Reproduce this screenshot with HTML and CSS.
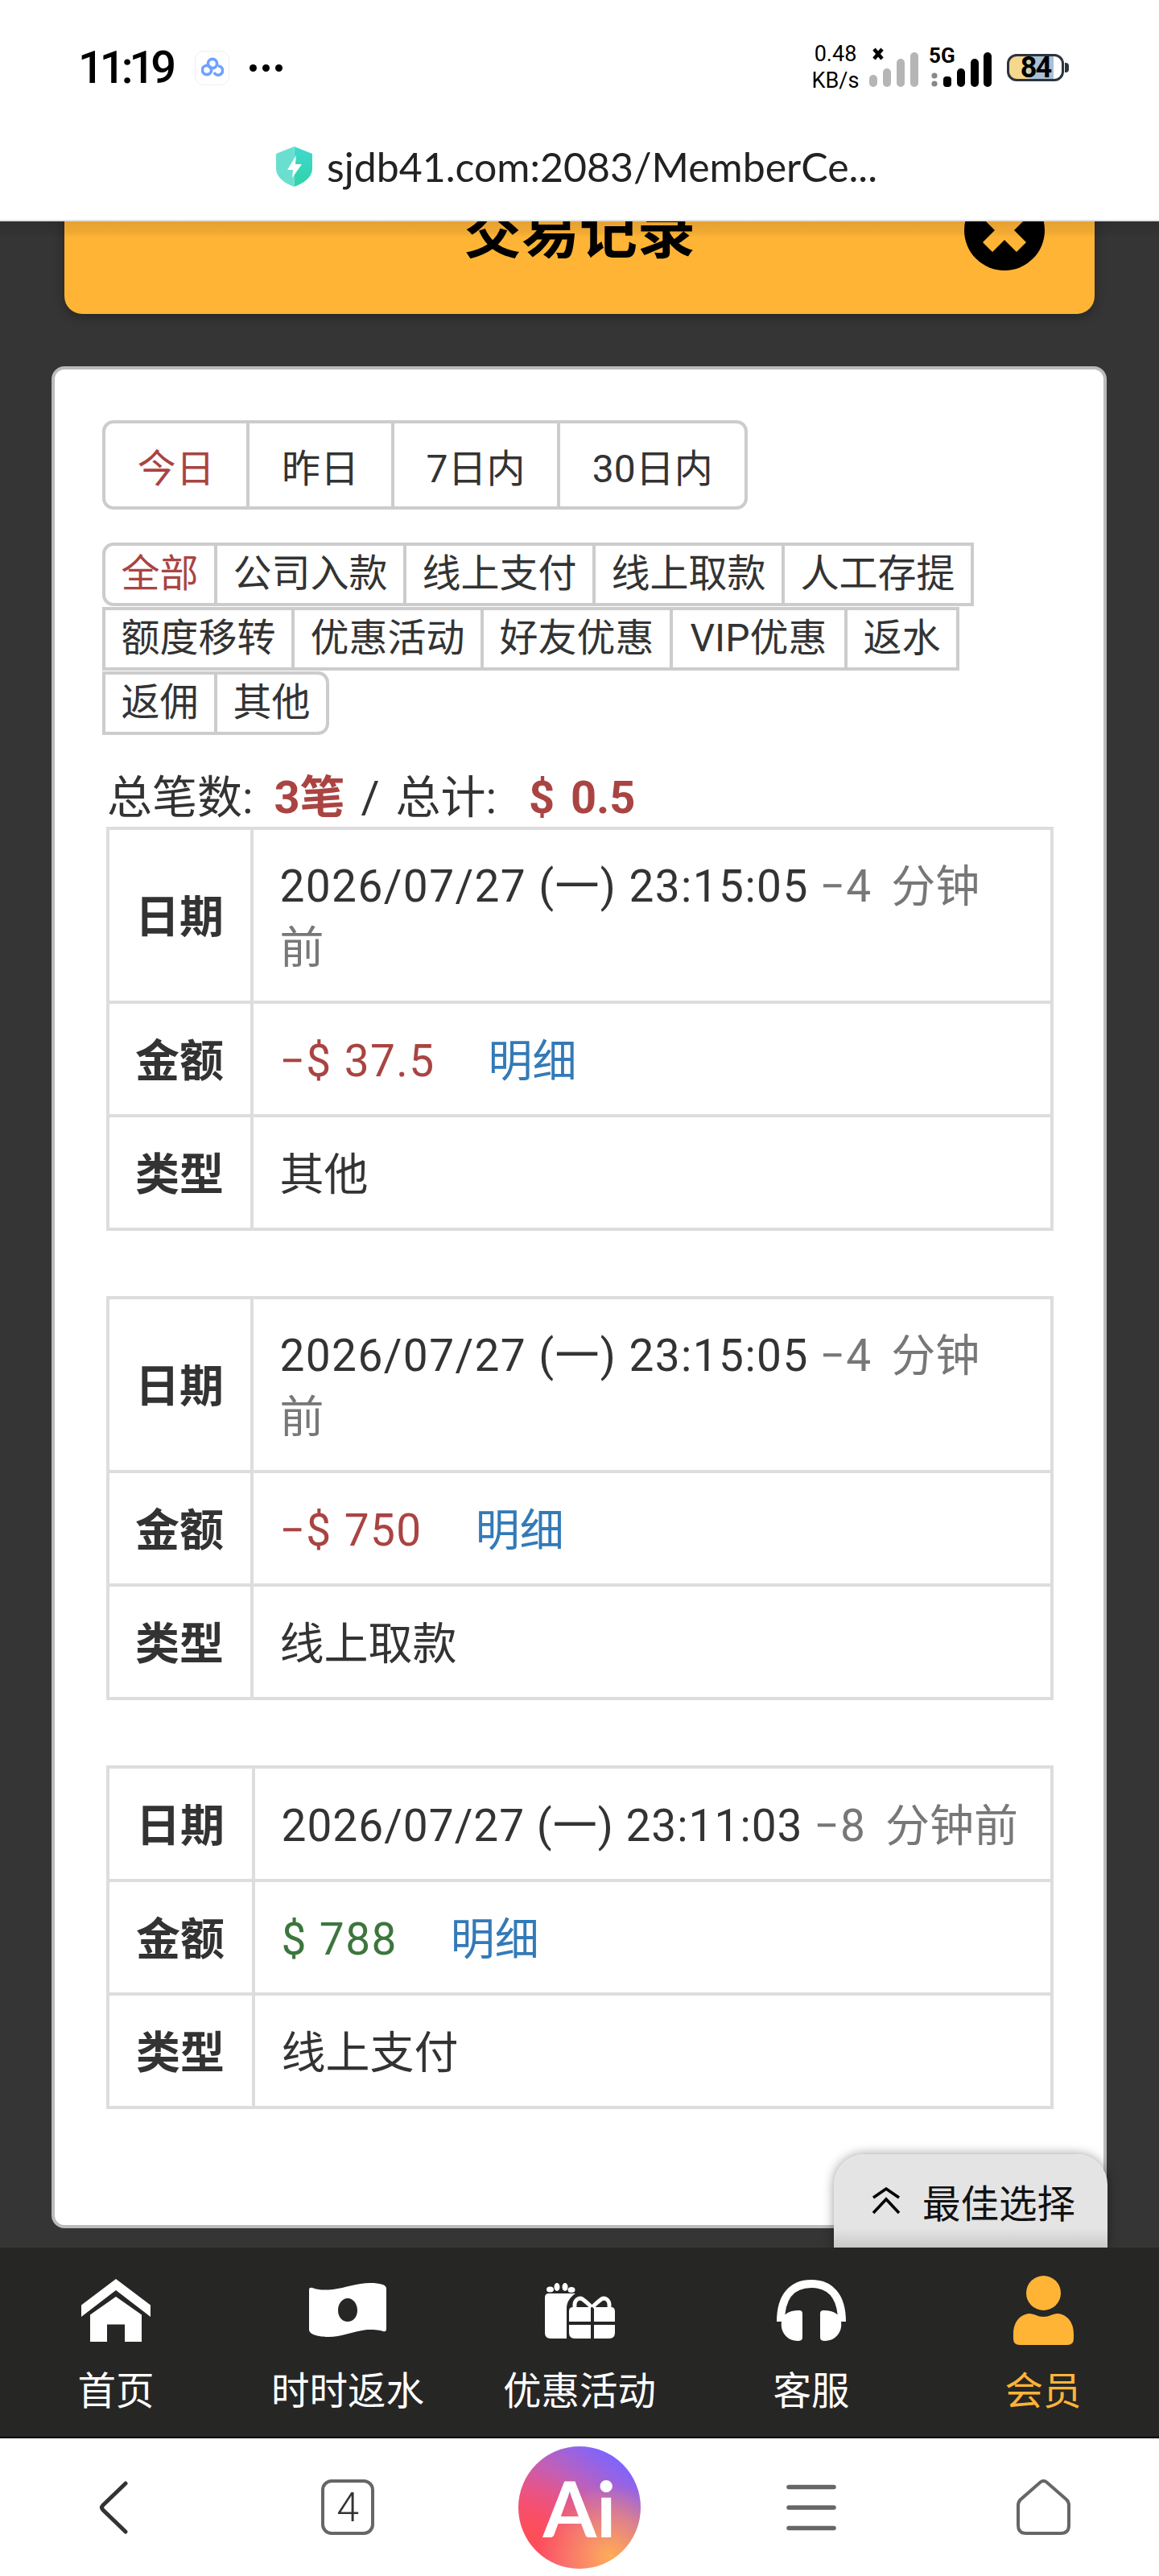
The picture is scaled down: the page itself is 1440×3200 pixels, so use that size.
FILE: index.html
```html
<!DOCTYPE html>
<html lang="zh-CN">
<head>
<meta charset="utf-8">
<title>交易记录</title>
<link rel="stylesheet" href="styles.css">
</head>
<body>
<div class="phone">
  <header class="top">
    <div class="status">
      <span class="clock">11:19</span>
      <span class="app-badge">
        <svg width="28" height="26" viewBox="0 0 28 26"><g fill="none" stroke="#6ea1ff" stroke-width="3.6"><circle cx="14" cy="8" r="5.6"/><circle cx="7" cy="16" r="5.6"/><path d="M16 19a5.6 5.6 0 1 0 5-8"/></g></svg>
      </span>
      <span class="more"><i></i><i></i><i></i></span>
      <span class="status-right">
        <span class="speed"><span>0.48</span><span>KB/s</span></span>
        <svg class="signals" width="164" height="58" viewBox="0 0 164 58">
          <path d="M10 6l10 12M20 6l-10 12" stroke="#000" stroke-width="4.5" fill="none"/>
          <g fill="#b5b5b5"><rect x="4" y="38" width="10" height="15" rx="5"/><rect x="21" y="30" width="10" height="23" rx="5"/><rect x="38" y="18" width="10" height="35" rx="5"/><rect x="55" y="10" width="10" height="43" rx="5"/></g>
          <text class="net" x="78" y="23">5G</text>
          <circle cx="85" cy="39" r="3.6" fill="#888"/><circle cx="85" cy="49" r="3.6" fill="#888"/>
          <g fill="#000"><rect x="96" y="40" width="10" height="13" rx="4"/><rect x="113" y="30" width="10" height="23" rx="5"/><rect x="130" y="18" width="10" height="35" rx="5"/><rect x="146" y="10" width="10" height="43" rx="5"/></g>
        </svg>
        <span class="battery"><span class="battery-num">84</span></span>
      </span>
    </div>
    <div class="address">
      <svg width="45" height="50" viewBox="0 0 45 50">
        <defs><linearGradient id="shieldR" x1="0" y1="0" x2="0" y2="1"><stop offset="0" stop-color="#40d9d0"/><stop offset="1" stop-color="#2fd3a6"/></linearGradient></defs>
        <path d="M22.5 0L45 9V28C45 38 34 46 22.5 50Z" fill="url(#shieldR)"/>
        <path d="M22.5 0L0 9V28C0 38 11 46 22.5 50Z" fill="#6adfd0"/>
        <path d="M25 11L14 29H21L20 39L32 22H24Z" fill="#fff"/>
      </svg>
      <span class="url">sjdb41.com:2083/MemberCe...</span>
    </div>
  </header>

  <main class="main">
    <div class="panel">
      <div class="title-bar">
        <h1 class="title">交易记录</h1>
        <span class="close">
          <svg width="100" height="100" viewBox="0 0 100 100"><path d="M29 29L71 71M71 29L29 71" stroke="#ffb436" stroke-width="17" fill="none"/></svg>
        </span>
      </div>

      <section class="card">
        <div class="ranges">
          <a class="range on">今日</a><a class="range">昨日</a><a class="range">7日内</a><a class="range">30日内</a>
        </div>
        <div class="filters">
          <a class="filter on first">全部</a><a class="filter">公司入款</a><a class="filter">线上支付</a><a class="filter">线上取款</a><a class="filter">人工存提</a><a class="filter">额度移转</a><a class="filter">优惠活动</a><a class="filter">好友优惠</a><a class="filter vip">VIP优惠</a><a class="filter">返水</a><a class="filter">返佣</a><a class="filter last">其他</a>
        </div>
        <p class="summary">总笔数: <b class="sum-count">3笔</b> / 总计: <b class="sum-total">$ 0.5</b></p>

        <table class="record">
          <tr class="tall"><th>日期</th><td><span class="date">2026/07/27 (一) 23:15:05</span> <span class="ago"><span class="num">−4</span> 分钟<br>前</span></td></tr>
          <tr><th>金额</th><td><span class="num out">−$ 37.5</span><a class="detail">明细</a></td></tr>
          <tr><th>类型</th><td>其他</td></tr>
        </table>
        <table class="record">
          <tr class="tall"><th>日期</th><td><span class="date">2026/07/27 (一) 23:15:05</span> <span class="ago"><span class="num">−4</span> 分钟<br>前</span></td></tr>
          <tr><th>金额</th><td><span class="num out">−$ 750</span><a class="detail">明细</a></td></tr>
          <tr><th>类型</th><td>线上取款</td></tr>
        </table>
        <table class="record wide">
          <tr><th>日期</th><td><span class="date tight">2026/07/27 (一) 23:11:03</span> <span class="ago"><span class="num">−8</span> 分钟前</span></td></tr>
          <tr><th>金额</th><td><span class="num in">$ 788</span><a class="detail">明细</a></td></tr>
          <tr><th>类型</th><td>线上支付</td></tr>
        </table>
      </section>
    </div>

    <div class="best">
      <svg width="36" height="34" viewBox="0 0 36 34"><path d="M2 13L18 2L34 13M2 32L18 15L34 32" fill="none" stroke="#000" stroke-width="3.6"/></svg>
      <span>最佳选择</span>
    </div>
  </main>

  <nav class="tabbar">
    <a class="tab">
      <span class="tab-icon"><svg width="86" height="78" viewBox="0 0 86 78"><path d="M43 0L86 32.4V47L43 14L0 47V32.4Z M43 22L75 44.5V78H54V56.6H32V78H11V44.5Z" fill="#fff"/></svg></span>
      <span>首页</span>
    </a>
    <a class="tab">
      <span class="tab-icon"><svg width="96" height="68" viewBox="0 0 96 68"><path fill="#fff" fill-rule="evenodd" d="M0 8Q0 5 4 6C12 9 20 9 30 8C45 6 60 0 76 0C88 0 96 2 96 7V57Q96 61 92 60C85 58 80 58 72 58C55 60 40 67 24 67C12 67 0 64 0 58Z M48 19C41 19 36 26 36 34C36 42 41 48 48 48C55 48 60 42 60 34C60 26 55 19 48 19Z"/></svg></span>
      <span>时时返水</span>
    </a>
    <a class="tab">
      <span class="tab-icon"><svg width="87" height="69" viewBox="0 0 87 69"><g fill="#fff"><ellipse cx="6.500" cy="8" rx="4.500" ry="3.500"/><ellipse cx="15" cy="5" rx="3.500" ry="5"/><ellipse cx="25" cy="5" rx="3.500" ry="5"/><ellipse cx="33" cy="8.500" rx="4.500" ry="3.500"/><path d="M0 18Q0 13 5 13H38C32 17 27 23 27 32V69H7Q0 69 0 62Z"/><path d="M30 35Q30 30 35 30H57V48H30Z M61 30H82Q87 30 87 35V48H61Z M30 52H57V69H37Q30 69 30 62Z M61 52H87V62Q87 69 80 69H61Z"/></g><g fill="none" stroke="#fff" stroke-width="5"><path d="M37 30C36 20 43 17 48 21C52 24 55 27 58 30"/><path d="M80 30C81 20 74 17 69 21C65 24 62 27 59 30"/></g></svg></span>
      <span>优惠活动</span>
    </a>
    <a class="tab">
      <span class="tab-icon"><svg width="86" height="76" viewBox="0 0 86 76"><path d="M5 52C5 20 20 5 43 5C66 5 81 20 81 52" fill="none" stroke="#fff" stroke-width="10"/><path fill="#fff" d="M32 42Q32 38 28 38C14 38 7 44 6 52C4 66 14 76 26 76Q32 76 32 72Z M54 42Q54 38 58 38C72 38 79 44 80 52C82 66 72 76 60 76Q54 76 54 72Z"/></svg></span>
      <span>客服</span>
    </a>
    <a class="tab active">
      <span class="tab-icon"><svg width="75" height="86" viewBox="0 0 75 86"><ellipse cx="37.500" cy="21.500" rx="21.500" ry="21.500" fill="#ffb436"/><path fill="#ffb436" d="M0 78V72C0 58 8 48 20 47C26 47 30 51 37.500 51C45 51 49 47 55 47C67 48 75 58 75 72V78Q75 86 67 86H8Q0 86 0 78Z"/></svg></span>
      <span>会员</span>
    </a>
  </nav>

  <footer class="browser">
    <span class="slot back"><svg width="36" height="66" viewBox="0 0 36 66"><path d="M33 3L5 30Q2 33 5 36L33 63" fill="none" stroke="#333" stroke-width="5" stroke-linecap="round"/></svg></span>
    <span class="slot"><span class="pages">4</span></span>
    <span class="slot"><span class="ai">Ai</span></span>
    <span class="slot"><svg width="62" height="58" viewBox="0 0 62 58"><path d="M3 3.500H59M3 29H59M3 54.500H59" stroke="#666" stroke-width="5.500" stroke-linecap="round" fill="none"/></svg></span>
    <span class="slot"><svg width="67" height="69" viewBox="0 0 67 69"><path d="M29 4Q33.500 0 38 4L62 25Q65 28 65 32V57Q65 67 55 67H12Q2 67 2 57V32Q2 28 5 25Z" fill="none" stroke="#666" stroke-width="4"/></svg></span>
  </footer>
</div>
</body>
</html>
```
FILE: styles.css
```css
* { box-sizing: border-box; }

html, body {
  margin: 0;
  padding: 0;
}

body {
  font-family: Roboto, "Noto Sans CJK SC", sans-serif;
  color: #333;
  background: #fff;
}

a { color: inherit; text-decoration: none; }

.phone {
  width: 1440px;
  height: 3200px;
  display: flex;
  flex-direction: column;
  overflow: hidden;
}

/* System status bar and address line */
.top {
  flex: none;
  height: 275px;
  background: #fff;
  border-bottom: 2px solid #e2e2e2;
  position: relative;
  z-index: 3;
}

.status {
  height: 168px;
  padding: 0 112px 0 97px;
  display: flex;
  align-items: center;
}

.clock {
  font-size: 56px;
  font-weight: 500;
  letter-spacing: -5px;
  color: #000;
  width: 145px;
}

.app-badge {
  width: 43px;
  height: 43px;
  border: 1px solid #f0f0f0;
  border-radius: 11px;
  display: flex;
  align-items: center;
  justify-content: center;
}

.more {
  display: flex;
  gap: 7px;
  margin-left: 25px;
}

.more i {
  width: 9px;
  height: 9px;
  border-radius: 50%;
  background: #000;
}

.status-right {
  margin-left: auto;
  display: flex;
  align-items: center;
}

.speed {
  display: flex;
  flex-direction: column;
  align-items: center;
  font-size: 27px;
  line-height: 33px;
  color: #000;
  width: 56px;
  margin-right: 10px;
}

.signals { display: block; }

.net {
  font-family: Roboto, sans-serif;
  font-size: 26px;
  font-weight: 700;
  fill: #000;
}

.battery {
  width: 71px;
  height: 34px;
  margin: 0 6px 0 11px;
  border: 3px solid #2c3440;
  border-radius: 12px;
  background: linear-gradient(90deg, #f4d88c 0 30%, #a9c0d8 45% 84%, #fff 84%);
  display: flex;
  align-items: center;
  justify-content: center;
  position: relative;
}

.battery::after {
  content: "";
  position: absolute;
  right: -9px;
  top: 8px;
  width: 5px;
  height: 12px;
  border-radius: 0 4px 4px 0;
  background: #2c3440;
}

.battery-num {
  font-size: 36px;
  font-weight: 700;
  letter-spacing: -2px;
  color: #000;
  line-height: 1;
}

.address {
  height: 78px;
  padding-right: 7px;
  display: flex;
  align-items: center;
  justify-content: center;
  gap: 18px;
}

.url {
  font-family: Lato, sans-serif;
  font-size: 50px;
  color: #222;
}

/* Scrolled page content */
.main {
  flex: 1;
  min-height: 0;
  position: relative;
  overflow: hidden;
  background: #1e1e1e;
}

.main::before {
  content: "";
  position: absolute;
  left: 0;
  right: 0;
  top: 0;
  height: 20px;
  background: linear-gradient(rgba(0, 0, 0, .1), rgba(0, 0, 0, .06) 70%, rgba(0, 0, 0, 0));
  z-index: 2;
}

.panel {
  margin-top: 12px;
  min-height: 100%;
  background: #353535;
  border-radius: 30px 30px 0 0;
  padding-bottom: 30px;
}

.title-bar {
  margin: -106px 80px 0;
  height: 209px;
  padding: 0 62px 0 0;
  background: #ffb436;
  border-radius: 0 0 22px 22px;
  box-shadow: 0 4px 14px rgba(0, 0, 0, .3);
  display: flex;
  align-items: center;
  justify-content: flex-end;
  position: relative;
}

.title {
  position: absolute;
  left: 0;
  right: 0;
  margin: 8px 0 0;
  text-align: center;
  font-size: 72px;
  font-weight: 700;
  line-height: 1;
  color: #000;
}

.close {
  width: 100px;
  height: 100px;
  border-radius: 50%;
  background: #000;
  position: relative;
}

.close svg { display: block; }

.card {
  margin: 65px 65px 0 64px;
  padding: 63px 59px 144px;
  background: #fff;
  border: 4px solid #bbb;
  border-radius: 16px;
}

/* Date range and type filters */
.ranges {
  display: flex;
  padding-left: 4px;
}

.range {
  margin-left: -4px;
  height: 111px;
  padding: 0 39.7px;
  border: 4px solid #ccc;
  font-size: 48px;
  display: flex;
  align-items: center;
  white-space: nowrap;
}

.range:first-child { border-radius: 14px 0 0 14px; }
.range:last-child { border-radius: 0 14px 14px 0; }

.range.on,
.filter.on { color: #a94442; }

.filters {
  margin-top: 41px;
  padding-left: 4px;
  display: flex;
  flex-wrap: wrap;
  row-gap: 1.33px;
}

.filter {
  margin-left: -4px;
  height: 78.67px;
  padding: 0 19.5px;
  border: 4px solid #ccc;
  font-size: 48px;
  line-height: 70px;
  white-space: nowrap;
}

.filter.vip { padding: 0 21.5px; }
.filter.first { border-radius: 14px 0 0 14px; }
.filter.last { border-radius: 0 14px 14px 0; }

.summary {
  margin: 40px 0 0;
  height: 74px;
  padding-left: 6px;
  font-size: 56px;
  line-height: 76px;
  white-space: nowrap;
  word-spacing: 6px;
}

.summary b { color: #a94442; }
.sum-count { margin-left: 6px; }
.sum-total { margin-left: 20px; }

/* Transaction records */
.record {
  width: 1177px;
  margin: 0 0 81px 4.5px;
  table-layout: fixed;
  border-collapse: separate;
  border-spacing: 0;
  border-left: 4px solid #ddd;
  border-top: 4px solid #ddd;
  font-size: 55px;
  line-height: 76px;
}

.record:last-child { margin-bottom: 0; }

.record th,
.record td {
  height: 141px;
  padding: 31px 0 26px;
  border-right: 4px solid #ddd;
  border-bottom: 4px solid #ddd;
  vertical-align: middle;
}

.record .tall th,
.record .tall td { height: 216px; }

.record th {
  width: 179px;
  text-align: center;
  font-weight: 700;
}

.record.wide th { width: 181px; }

.record td {
  padding-left: 33px;
  padding-right: 10px;
  text-align: left;
}

.date { letter-spacing: 1.4px; }
.date.tight { letter-spacing: 1px; }
.num { letter-spacing: 1.4px; }
.ago { color: #777; word-spacing: 10px; }
.out { color: #a94442; }
.in { color: #3c763d; }

.detail {
  margin-left: 66px;
  color: #337ab7;
}

/* Floating sort tab */
.best {
  position: absolute;
  right: 64px;
  bottom: 0;
  width: 340px;
  height: 116px;
  padding: 0 40px 0 0;
  background: linear-gradient(#e4e4e4 80%, #c9c9c9);
  border-radius: 38px 38px 0 0;
  box-shadow: 0 0 14px rgba(0, 0, 0, .4);
  display: flex;
  align-items: center;
  justify-content: flex-end;
  gap: 27px;
  font-size: 47.5px;
  color: #111;
}

/* Site bottom navigation */
.tabbar {
  flex: none;
  height: 237px;
  padding-top: 33px;
  background: #262625;
  border-bottom: 2px solid #000;
  display: flex;
  position: relative;
  z-index: 1;
}

.tab {
  flex: 1;
  display: flex;
  flex-direction: column;
  align-items: center;
  color: #fff;
  font-size: 47.5px;
  line-height: 66px;
}

.tab.active { color: #ffb436; }

.tab-icon {
  height: 90px;
  margin-bottom: 23px;
  display: flex;
  align-items: center;
}

/* Browser toolbar */
.browser {
  flex: none;
  height: 171px;
  background: #fff;
  display: flex;
  align-items: center;
}

.slot {
  flex: 1;
  display: flex;
  align-items: center;
  justify-content: center;
}

.back svg { margin-right: 6px; }

.pages {
  width: 66px;
  height: 69px;
  border: 4px solid #666;
  border-radius: 13px;
  font-size: 50px;
  font-weight: 300;
  color: #333;
  display: flex;
  align-items: center;
  justify-content: center;
}

.ai {
  width: 152px;
  height: 152px;
  border-radius: 50%;
  background:
    radial-gradient(circle at 75% 90%, #ffac57 0, rgba(255, 172, 87, 0) 50%),
    radial-gradient(circle at 10% 75%, #ff4d55 0, rgba(255, 77, 85, 0) 50%),
    linear-gradient(215deg, #7f65fb 15%, #c060b8 40%, #f0528c 70%);
  color: #fff;
  font-family: Lato, sans-serif;
  font-size: 96px;
  font-weight: 700;
  line-height: 152px;
  text-align: center;
}
```
